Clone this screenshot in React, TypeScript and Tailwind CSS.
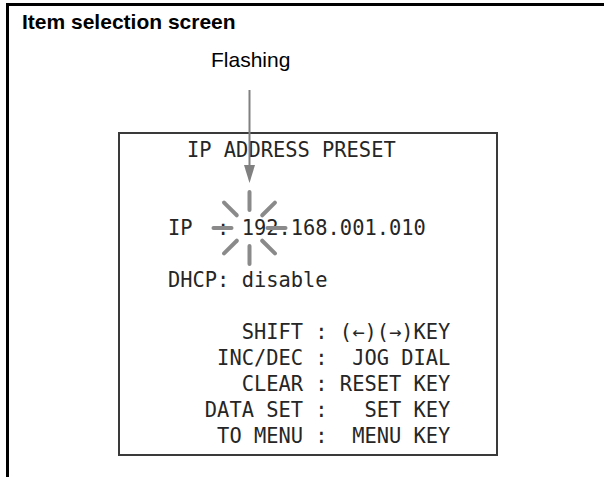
const lcdRows = [
  "",
  "",
  "",
  "IP  : 192.168.001.010",
  "",
  "DHCP: disable",
  "",
  "      SHIFT : (←)(→)KEY",
  "    INC/DEC :  JOG DIAL",
  "      CLEAR : RESET KEY",
  "   DATA SET :   SET KEY",
  "    TO MENU :  MENU KEY",
];

// rays of the "flashing" mark around the cursor digit
const rays = [0, 45, 90, 135, 180, 225, 270, 315].map((deg) => {
  const a = (deg * Math.PI) / 180;
  const cx = 249.5;
  const cy = 228;
  return {
    x1: cx + Math.cos(a) * 18,
    y1: cy + Math.sin(a) * 18,
    x2: cx + Math.cos(a) * 36,
    y2: cy + Math.sin(a) * 36,
  };
});

const App = () => {
  return (
    <div className="relative h-[477px] w-[604px] overflow-hidden bg-white">
      <div className="ml-[6px] mt-[3px] h-[480px] border-l-[3px] border-t-[3px] border-black pl-[13px] pt-[4px]">
        <h1 className="text-[21px] font-bold leading-[24px] text-black [font-family:'Liberation_Sans',Arial,sans-serif]">
          Item selection screen
        </h1>
        <div className="ml-[189px] mt-[14px] w-fit text-[21px] leading-[24px] text-black [font-family:'Liberation_Sans',Arial,sans-serif]">
          Flashing
        </div>

        <div className="ml-[96px] mt-[60px] w-[380px] border-2 border-[#3a3a3a] pb-[5px] pl-[48px] pt-[3px] text-[20.4px] leading-[26px] text-[#262626] [font-family:'DejaVu_Sans_Mono',monospace]">
          <div className="h-[26px] whitespace-pre pl-[19px]">IP ADDRESS PRESET</div>
          {lcdRows.slice(1).map((row, i) => (
            <div key={i} className="h-[26px] whitespace-pre">
              {row}
            </div>
          ))}
        </div>
      </div>

      <svg
        className="pointer-events-none absolute left-0 top-0"
        width="604"
        height="477"
        viewBox="0 0 604 477"
      >
        <line x1="249.5" y1="90" x2="249.5" y2="168" stroke="#808080" strokeWidth="2" />
        <polygon points="244,165 255,165 249.5,183" fill="#808080" />
        {rays.map((r, i) => (
          <line
            key={i}
            x1={r.x1}
            y1={r.y1}
            x2={r.x2}
            y2={r.y2}
            stroke="#8a8a8a"
            strokeWidth="4"
            strokeLinecap="round"
          />
        ))}
      </svg>
    </div>
  );
};

export default App;
